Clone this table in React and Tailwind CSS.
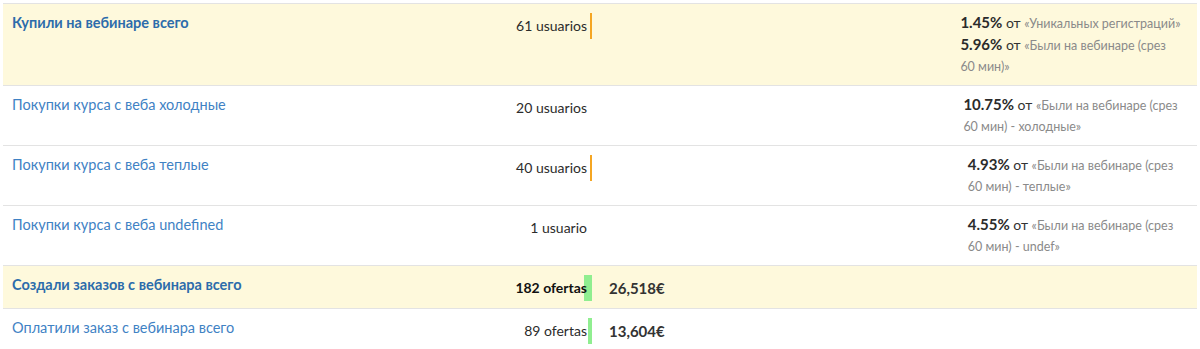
import React from "react";

const rows = [
  {
    name: "Купили на вебинаре всего",
    total: true,
    count: "61 usuarios",
    bar: { w: 2, color: "bg-[#f5a623]" },
    pct: [
      [["1.45%", "«Уникальных регистраций»"]],
      [["5.96%", "«Были на вебинаре (срез"], [null, "60 мин)»"]],
    ],
  },
  {
    name: "Покупки курса с веба холодные",
    count: "20 usuarios",
    pct: [[["10.75%", "«Были на вебинаре (срез"], [null, "60 мин) - холодные»"]]],
  },
  {
    name: "Покупки курса с веба теплые",
    count: "40 usuarios",
    bar: { w: 2, color: "bg-[#f5a623]" },
    pct: [[["4.93%", "«Были на вебинаре (срез"], [null, "60 мин) - теплые»"]]],
  },
  {
    name: "Покупки курса с веба undefined",
    count: "1 usuario",
    pct: [[["4.55%", "«Были на вебинаре (срез"], [null, "60 мин) - undef»"]]],
  },
  {
    name: "Создали заказов с вебинара всего",
    total: true,
    count: "182 ofertas",
    bar: { w: 8, color: "bg-[#90ee90]" },
    money: "26,518€",
  },
  {
    name: "Оплатили заказ с вебинара всего",
    count: "89 ofertas",
    bar: { w: 4, color: "bg-[#90ee90]" },
    money: "13,604€",
  },
];

function Pct({ items }) {
  return (
    <div className="flex flex-col">
      {items.map((lines, i) =>
        lines.map(([num, txt], j) => (
          <div key={i + "-" + j} className="whitespace-nowrap h-[21.5px] leading-[21.5px] text-[14px]">
            {num && (
              <>
                <span className="font-bold text-[15px] leading-none text-[#2b2b2b]">{num}</span>
                <span className="text-[14px] leading-none text-[#333]"> от </span>
              </>
            )}
            <span className="text-[12.5px] leading-none text-[#8a8a8a]">{txt}</span>
          </div>
        ))
      )}
    </div>
  );
}

export default function App() {
  return (
    <div
      className="pt-[3px] pl-[3px] bg-white"
      style={{ fontFamily: "Lato, 'Open Sans', sans-serif" }}
    >
      <div className="w-[1194px] border-t border-[#e3e3e3]">
        {rows.map((r, i) => (
          <div
            key={i}
            className={
              "grid grid-cols-[397px_192px_352px_253px] border-b border-[#e3e3e3] " +
              (r.total ? "bg-[#fef9dc]" : "bg-white")
            }
          >
            <div className="pl-[9px] py-2 text-[14.5px] leading-[21.5px]">
              <span className={r.total ? "font-bold text-[#2c6cab]" : "text-[#3f82c4]"}>
                {r.name}
              </span>
            </div>
            <div className="pt-[9px] pb-[7px]">
              <div className="relative h-[26px]">
                {r.bar && (
                  <div
                    className={"absolute right-0 top-0 h-full " + r.bar.color}
                    style={{ width: r.bar.w }}
                  />
                )}
                <div
                  className={
                    "relative text-right pr-[5px] leading-[26px] text-[14px] " +
                    (r.total && r.money ? "font-bold text-[#111]" : "text-[#2b2b2b]")
                  }
                >
                  {r.count}
                </div>
              </div>
            </div>
            <div className="pt-[9px] pb-[7px] pl-[17px]">
              {r.money && (
                <div className="leading-[26px] text-[15px] font-bold text-[#333]">{r.money}</div>
              )}
            </div>
            <div className="py-2 flex justify-center">{r.pct && <Pct items={r.pct} />}</div>
          </div>
        ))}
      </div>
    </div>
  );
}
